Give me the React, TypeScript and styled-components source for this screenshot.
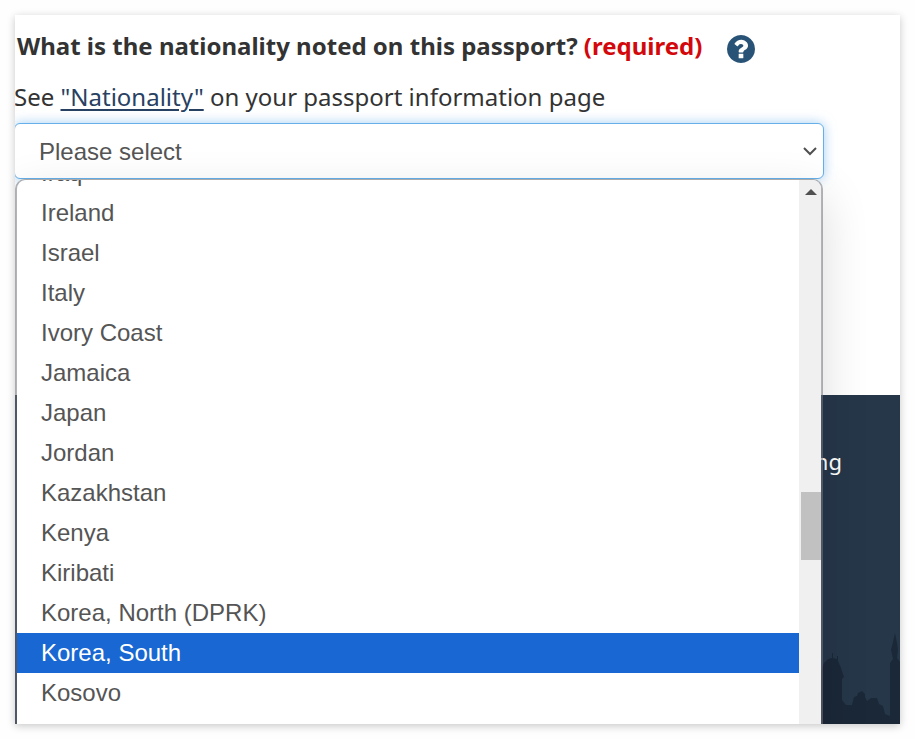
import React from 'react';
import styled, { createGlobalStyle } from 'styled-components';

const countries = [
  'Iraq',
  'Ireland',
  'Israel',
  'Italy',
  'Ivory Coast',
  'Jamaica',
  'Japan',
  'Jordan',
  'Kazakhstan',
  'Kenya',
  'Kiribati',
  'Korea, North (DPRK)',
  'Korea, South',
  'Kosovo',
];

const GlobalStyle = createGlobalStyle`
  * { box-sizing: border-box; }
  body {
    margin: 0;
    background: #fefefe;
    color: #333;
    font-family: 'Noto Sans', sans-serif;
    font-size: 24px;
  }
`;

const Page = styled.main`
  padding: 15px;
`;

const Card = styled.section`
  background: #fff;
  overflow: hidden;
  box-shadow: 0 2px 8px rgba(0, 0, 0, 0.22);
`;

const Question = styled.div`
  min-height: 380px;
  margin-left: -1px;
`;

const Heading = styled.div`
  display: flex;
  align-items: center;
  gap: 25px;
  height: 65px;
  padding: 2px 0 0 3px;
`;

const Label = styled.label`
  font-weight: 700;
  line-height: 32px;
  padding-bottom: 6px;
  white-space: nowrap;
`;

const Required = styled.span`
  color: #d3080c;
`;

const HelpButton = styled.button`
  display: flex;
  padding: 0;
  border: 0;
  background: none;
  color: #295376;
  cursor: pointer;
`;

const Hint = styled.p`
  margin: 0;
  height: 43px;
  line-height: 34px;
  white-space: nowrap;
`;

const HintLink = styled.a`
  color: #284162;
  text-decoration-thickness: 2px;
  text-underline-offset: 3px;
`;

const Picker = styled.div`
  position: relative;
  width: calc(100% - 76px);
`;

const Select = styled.select`
  display: block;
  appearance: none;
  width: 100%;
  height: 56px;
  padding: 0 24px;
  border: 1px solid #66afe9;
  border-radius: 6px;
  outline: 0;
  background: #fff;
  box-shadow: 0 0 12px rgba(102, 175, 233, 0.6);
  color: #555;
  font: 24px 'Liberation Sans', Arial, sans-serif;
`;

const Chevron = styled.svg`
  position: absolute;
  top: 23px;
  right: 7px;
  pointer-events: none;
`;

const Menu = styled.div`
  position: absolute;
  top: 56px;
  left: 1px;
  right: 1px;
  z-index: 1;
  display: flex;
  height: 560px;
  overflow: hidden;
  border: 2px solid rgba(118, 118, 124, 0.55);
  border-top: 1px solid #aaa;
  border-radius: 10px 10px 0 0;
  background: #fff;
  background-clip: padding-box;
  box-shadow: 0 16px 48px rgba(0, 0, 0, 0.14);
`;

const Options = styled.ul`
  flex: 1;
  margin: -27px 0 0;
  padding: 0;
  list-style: none;
`;

const Option = styled.li<{ $active: boolean }>`
  height: 40px;
  padding-left: 24px;
  font: 24px/40px 'Liberation Sans', Arial, sans-serif;
  color: ${({ $active }) => ($active ? '#fff' : '#555')};
  background: ${({ $active }) => ($active ? '#1967d2' : 'transparent')};
`;

const Track = styled.div`
  display: flex;
  flex-direction: column;
  width: 22px;
  background: #f0f0f0;
`;

const ScrollUp = styled.svg`
  flex: none;
  margin: 9px 0 0 6px;
`;

const Thumb = styled.div`
  flex: none;
  height: 68px;
  margin: 297px 0 0 2px;
  background: #c1c1c1;
`;

const Footer = styled.footer`
  display: flex;
  flex-direction: column;
  align-items: flex-end;
  justify-content: space-between;
  height: 329px;
  padding-top: 50px;
  background: #26374a;
`;

const FooterLink = styled.a`
  margin-right: 58px;
  color: #fff;
  font-size: 22px;
  line-height: 32px;
  text-decoration: none;
`;

const Skyline = styled.svg`
  display: block;
`;

export default function App() {
  return (
    <>
      <GlobalStyle />
      <Page>
        <Card>
          <Question>
            <Heading>
              <Label htmlFor="nationality">
                What is the nationality noted on this passport? <Required>(required)</Required>
              </Label>
              <HelpButton type="button" aria-label="Help">
                <svg width="28" height="28" viewBox="128 128 1536 1536" fill="currentColor">
                  <path d="M1024 1376v-192q0-14-9-23t-23-9h-192q-14 0-23 9t-9 23v192q0 14 9 23t23 9h192q14 0 23-9t9-23zm256-672q0-88-55.500-163t-138.500-116-170-41q-243 0-371 213-15 24 8 42l132 100q7 6 19 6 16 0 25-12 53-68 86-92 34-24 86-24 48 0 85.500 26t37.500 59q0 38-20 61t-68 45q-63 28-115.500 86.500t-52.500 125.500v36q0 14 9 23t23 9h192q14 0 23-9t9-23q0-19 21.500-49.500t54.500-49.500q32-18 49-28.500t46-35 44.500-48 28-60.500 12.500-81zm384 192q0 209-103 385.500t-279.500 279.500-385.500 103-385.500-103-279.500-279.500-103-385.500 103-385.500 279.500-279.500 385.500-103 385.500 103 279.500 279.500 103 385.500z" />
                </svg>
              </HelpButton>
            </Heading>
            <Hint>
              See <HintLink href="#nationality">"Nationality"</HintLink> on your passport information page
            </Hint>
            <Picker>
              <Select id="nationality" defaultValue="">
                <option value="">Please select</option>
              </Select>
              <Chevron width="14" height="12" viewBox="0 0 14 12" fill="none" stroke="#505050" strokeWidth="2">
                <path d="M1 2l6 6 6-6" />
              </Chevron>
              <Menu>
                <Options role="listbox" aria-label="Nationality">
                  {countries.map((name) => (
                    <Option
                      key={name}
                      role="option"
                      aria-selected={name === 'Korea, South'}
                      $active={name === 'Korea, South'}
                    >
                      {name}
                    </Option>
                  ))}
                </Options>
                <Track>
                  <ScrollUp width="12" height="6" viewBox="0 0 12 6" fill="#505050">
                    <path d="M0 6l6-6 6 6z" />
                  </ScrollUp>
                  <Thumb />
                </Track>
              </Menu>
            </Picker>
          </Question>
          <Footer>
            <FooterLink href="#footer">ng</FooterLink>
            <Skyline width="80" height="92" viewBox="0 0 80 92" fill="#1b2838">
              <path d="M0 92V42L4 31l4-4 4-1V21h1v5l4 1V24h1v5l3 7 3 9-2 2v21l4 5h6l2-8 3-1 1-3 4-2 3 3v3l2 4 4-3h6l2 6 4 2 2 8 5 2V31l3-4-2-9 2-8 2-9 2 10 1 7-1 8 3 4v62z" />
            </Skyline>
          </Footer>
        </Card>
      </Page>
    </>
  );
}
